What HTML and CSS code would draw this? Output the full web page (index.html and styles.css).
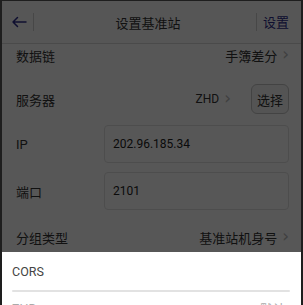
FILE: index.html
```html
<!DOCTYPE html>
<html lang="zh-CN">
<head>
<meta charset="utf-8">
<title>设置基准站</title>
<link rel="stylesheet" href="styles.css">
</head>
<body>
<div class="screen">
  <header class="topbar">
    <div class="back">
      <svg width="16" height="12" viewBox="0 0 16 12"><path d="M15 6H2M6.5 1.5L2 6l4.5 4.5" fill="none" stroke="#2c2c8c" stroke-width="1.5" stroke-linecap="round" stroke-linejoin="round"/></svg>
    </div>
    <div class="title">设置基准站</div>
    <div class="action">设置</div>
  </header>
  <main class="content">
    <div class="list">
      <div class="row">
        <span class="label">数据链</span>
        <span class="value">手簿差分<span class="chev">›</span></span>
      </div>
      <div class="row">
        <span class="label">服务器</span>
        <span class="value latin">ZHD<span class="chev">›</span></span>
        <button class="pick">选择</button>
      </div>
      <div class="row input-row">
        <span class="label latin">IP</span>
        <div class="field">202.96.185.34</div>
      </div>
      <div class="row input-row">
        <span class="label">端口</span>
        <div class="field">2101</div>
      </div>
      <div class="row">
        <span class="label">分组类型</span>
        <span class="value">基准站机身号<span class="chev">›</span></span>
      </div>
    </div>
  </main>
  <div class="mask"></div>
  <div class="sheet">
    <div class="sheet-item">CORS</div>
    <div class="sheet-rule"></div>
    <div class="sheet-item next"><span>ZHD</span><span>默认</span></div>
  </div>
</div>
</body>
</html>
```
FILE: styles.css
```css
* { box-sizing: border-box; }
html, body { margin: 0; padding: 0; }
body {
  background: #1e1e1e;
  font-family: "Noto Sans CJK SC", "Noto Sans", sans-serif;
  color: #333;
}
.screen {
  position: relative;
  width: 303px;
  height: 305px;
  overflow: hidden;
  background: #fff;
  border-left: 2px solid #1e1e1e;
  border-right: 2px solid #1e1e1e;
  border-top: 1px solid #1e1e1e;
  display: flex;
  flex-direction: column;
}
.topbar {
  flex: 0 0 43px;
  display: flex;
  align-items: center;
  border-bottom: 1px solid #d8d8d8;
  background: #fdfdfd;
  position: relative;
  z-index: 1;
}
.back {
  width: 32px;
  height: 18px;
  display: flex;
  align-items: center;
  justify-content: center;
  border-right: 1px solid #d0d0d0;
  padding-left: 2px;
}
.title {
  flex: 1;
  text-align: center;
  font-size: 13px;
  color: #333;
  padding-left: 6px;
}
.action {
  height: 18px;
  line-height: 18px;
  border-left: 1px solid #d0d0d0;
  padding: 0 12px 0 6px;
  font-size: 13px;
  color: #2c2c8c;
}
.content {
  flex: 1;
  overflow: hidden;
}
.list {
  margin-top: -11px;
  padding: 0 12px 0 14px;
}
.row {
  height: 44px;
  display: flex;
  align-items: center;
  font-size: 13px;
}
.label { flex: 0 0 88px; color: #333; }
.latin { font-family: Roboto, "Noto Sans", sans-serif; }
.value {
  margin-left: auto;
  display: flex;
  align-items: center;
  color: #333;
}
.value.latin { font-size: 12px; }
.chev {
  font-family: "DejaVu Sans", sans-serif;
  color: #bbb;
  font-size: 17px;
  line-height: 1;
  margin-left: 5px;
  margin-top: -2px;
}
.pick {
  margin-left: 20px;
  width: 38px;
  height: 30px;
  border: 1px solid #c4c4c4;
  border-radius: 6px;
  background: #f6f6f6;
  font-family: "Noto Sans CJK SC", sans-serif;
  font-size: 13px;
  color: #333;
  padding: 0;
}
.input-row {
  height: 47px;
  padding: 4px 0 5px;
}
.field {
  flex: 1;
  height: 38px;
  display: flex;
  align-items: center;
  padding-left: 8px;
  border: 1px solid #e0e0e0;
  border-radius: 4px;
  background: #fff;
  font-family: Roboto, "Noto Sans", sans-serif;
  font-size: 12px;
  color: #222;
}
.mask {
  position: absolute;
  inset: 0;
  background: rgba(0, 0, 0, 0.66);
  z-index: 2;
}
.sheet {
  position: absolute;
  left: 0;
  right: 0;
  top: 251px;
  bottom: 0;
  background: #fff;
  z-index: 3;
  padding: 0 11px 0 10px;
}
.sheet-item {
  height: 38px;
  display: flex;
  align-items: center;
  font-family: Roboto, "Noto Sans", sans-serif;
  font-size: 12.5px;
  color: #444;
}
.sheet-rule {
  height: 2px;
  border-radius: 1px;
  background: #e2e2e2;
}
.sheet-item.next {
  justify-content: space-between;
  color: #aaa;
  margin-top: -3px;
  padding-right: 4px;
}
```
